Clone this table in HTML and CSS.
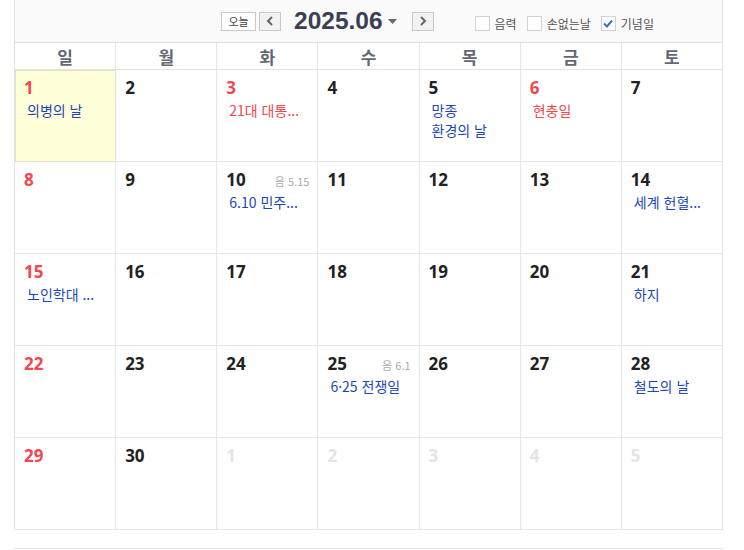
FILE: index.html
```html
<!DOCTYPE html>
<html lang="ko">
<head>
<meta charset="utf-8">
<link rel="stylesheet" href="styles.css">
</head>
<body>
<div class="cal">
  <div class="topbar">
    <div class="nav">
      <button class="btn today">오늘</button>
      <button class="btn arrow"><svg width="8" height="10" viewBox="0 0 8 10"><path d="M6 1 L2 5 L6 9" fill="none" stroke="#666" stroke-width="2"/></svg></button>
      <div class="title">2025.06<svg class="caret" width="9" height="5" viewBox="0 0 9 5"><path d="M0 0 H9 L4.5 5 Z" fill="#666"/></svg></div>
      <button class="btn arrow"><svg width="8" height="10" viewBox="0 0 8 10"><path d="M2 1 L6 5 L2 9" fill="none" stroke="#666" stroke-width="2"/></svg></button>
    </div>
    <div class="opts">
      <label class="opt"><span class="cb"></span>음력</label>
      <label class="opt"><span class="cb"></span>손없는날</label>
      <label class="opt"><span class="cb checked"><svg width="10" height="9" viewBox="0 0 10 9"><path d="M1 4.5 L4 7.5 L9 1.5" fill="none" stroke="#3d6fc4" stroke-width="2"/></svg></span>기념일</label>
    </div>
  </div>
  <div class="week">
    <div class="wd">일</div><div class="wd">월</div><div class="wd">화</div><div class="wd">수</div><div class="wd">목</div><div class="wd">금</div><div class="wd">토</div>
  </div>
  <div class="grid">
    <div class="cell todaycell"><div class="dh"><span class="num red">1</span></div><div class="ev">의병의 날</div></div>
    <div class="cell"><div class="dh"><span class="num">2</span></div></div>
    <div class="cell"><div class="dh"><span class="num red">3</span></div><div class="ev red">21대 대통...</div></div>
    <div class="cell"><div class="dh"><span class="num">4</span></div></div>
    <div class="cell"><div class="dh"><span class="num">5</span></div><div class="ev">망종</div><div class="ev">환경의 날</div></div>
    <div class="cell"><div class="dh"><span class="num red">6</span></div><div class="ev red">현충일</div></div>
    <div class="cell"><div class="dh"><span class="num">7</span></div></div>

    <div class="cell"><div class="dh"><span class="num red">8</span></div></div>
    <div class="cell"><div class="dh"><span class="num">9</span></div></div>
    <div class="cell"><div class="dh"><span class="num">10</span><span class="lunar">음 5.15</span></div><div class="ev">6.10 민주...</div></div>
    <div class="cell"><div class="dh"><span class="num">11</span></div></div>
    <div class="cell"><div class="dh"><span class="num">12</span></div></div>
    <div class="cell"><div class="dh"><span class="num">13</span></div></div>
    <div class="cell"><div class="dh"><span class="num">14</span></div><div class="ev">세계 헌혈...</div></div>

    <div class="cell"><div class="dh"><span class="num red">15</span></div><div class="ev">노인학대 ...</div></div>
    <div class="cell"><div class="dh"><span class="num">16</span></div></div>
    <div class="cell"><div class="dh"><span class="num">17</span></div></div>
    <div class="cell"><div class="dh"><span class="num">18</span></div></div>
    <div class="cell"><div class="dh"><span class="num">19</span></div></div>
    <div class="cell"><div class="dh"><span class="num">20</span></div></div>
    <div class="cell"><div class="dh"><span class="num">21</span></div><div class="ev">하지</div></div>

    <div class="cell"><div class="dh"><span class="num red">22</span></div></div>
    <div class="cell"><div class="dh"><span class="num">23</span></div></div>
    <div class="cell"><div class="dh"><span class="num">24</span></div></div>
    <div class="cell"><div class="dh"><span class="num">25</span><span class="lunar">음 6.1</span></div><div class="ev">6·25 전쟁일</div></div>
    <div class="cell"><div class="dh"><span class="num">26</span></div></div>
    <div class="cell"><div class="dh"><span class="num">27</span></div></div>
    <div class="cell"><div class="dh"><span class="num">28</span></div><div class="ev">철도의 날</div></div>

    <div class="cell"><div class="dh"><span class="num red">29</span></div></div>
    <div class="cell"><div class="dh"><span class="num">30</span></div></div>
    <div class="cell"><div class="dh"><span class="num dim">1</span></div></div>
    <div class="cell"><div class="dh"><span class="num dim">2</span></div></div>
    <div class="cell"><div class="dh"><span class="num dim">3</span></div></div>
    <div class="cell"><div class="dh"><span class="num dim">4</span></div></div>
    <div class="cell"><div class="dh"><span class="num dim">5</span></div></div>
  </div>
</div>
<div class="after"></div>
</body>
</html>
```

FILE: styles.css
```css
* { box-sizing: border-box; }
body {
  margin: 0;
  background: #fff;
  font-family: "Noto Sans CJK KR", "Noto Sans", sans-serif;
  color: #222;
}
.cal {
  margin-left: 14px;
  width: 709px;
  border-left: 1px solid #e3e3e3;
}
.topbar {
  height: 43px;
  background: #fafafa;
  border-bottom: 1px solid #dedede;
  border-right: 1px solid #e3e3e3;
  display: flex;
  align-items: center;
}
.nav {
  display: flex;
  align-items: center;
  margin-left: 206px;
}
.btn {
  height: 19px;
  border: 1px solid #c9c9c9;
  background: #fff;
  padding: 0;
  display: flex;
  align-items: center;
  justify-content: center;
  font-family: "Noto Sans CJK KR", sans-serif;
  font-size: 11px;
  color: #444;
  line-height: 1;
}
.today { width: 35px; }
.arrow { width: 22px; background: #f2f2f2; margin-left: 3px; }
.title {
  font-family: "Liberation Sans", Arial, sans-serif;
  font-weight: bold;
  font-size: 24.5px;
  color: #3b3f55;
  display: flex;
  align-items: center;
  margin: 0 12px 0 13px;
}
.caret { margin-left: 5px; margin-top: 1px; }
.opts {
  display: flex;
  align-items: center;
  margin-left: 41px;
  margin-top: 4px;
}
.opt {
  display: flex;
  align-items: center;
  font-size: 12px;
  color: #555;
  margin-right: 10px;
}
.cb {
  width: 15px;
  height: 15px;
  border: 1px solid #d2d2d2;
  background: #fff;
  margin-right: 5px;
  display: flex;
  align-items: center;
  justify-content: center;
}
.week {
  display: grid;
  grid-template-columns: repeat(7, 1fr);
  border-bottom: 1px solid #e3e3e3;
}
.wd {
  height: 26px;
  display: flex;
  align-items: center;
  justify-content: center;
  font-weight: bold;
  font-size: 17px;
  color: #636877;
  border-right: 1px solid #e6e6e6;
}
.grid {
  display: grid;
  grid-template-columns: repeat(7, 1fr);
}
.cell {
  height: 92px;
  border-right: 1px solid #e6e6e6;
  border-bottom: 1px solid #e6e6e6;
  padding: 6px 8px 0 9px;
}
.todaycell {
  background: #ffffd9;
  outline: 1px solid #e3e3c0;
  outline-offset: -1px;
}
.dh {
  display: flex;
  justify-content: space-between;
  align-items: baseline;
  height: 24px;
}
.num {
  font-family: "Noto Sans", sans-serif;
  font-weight: bold;
  font-size: 17px;
  color: #222;
  line-height: 24px;
}
.num.red { color: #f2474f; }
.num.dim { color: #e4e4e4; }
.lunar {
  font-size: 11px;
  color: #aaa;
  font-family: "Noto Sans CJK KR", sans-serif;
}
.ev {
  font-size: 14px;
  color: #1c47b8;
  line-height: 20px;
  padding-left: 3px;
  white-space: nowrap;
}
.ev.red { color: #f2474f; }
.after {
  margin: 18px 0 0 14px;
  width: 709px;
  border-top: 1px solid #e6e6e6;
  height: 2px;
}
```
